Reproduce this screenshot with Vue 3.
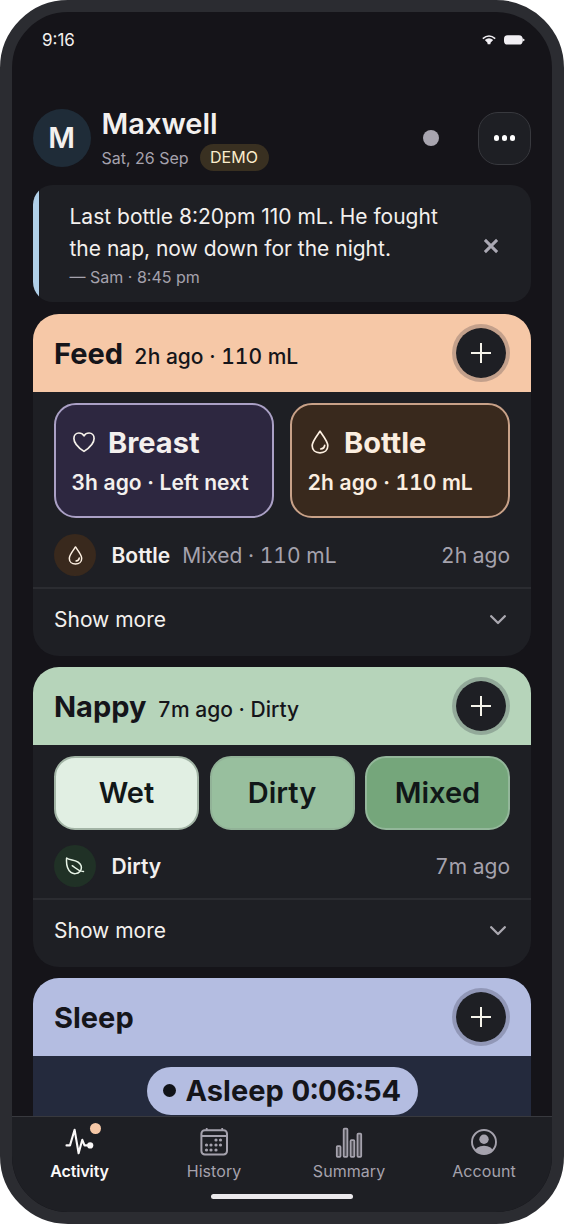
<script setup>
const feedTiles = [
  { name: 'Breast', icon: 'heart', detail: '3h ago · Left next', cls: 'breast' },
  { name: 'Bottle', icon: 'drop', detail: '2h ago · 110 mL', cls: 'bottle' },
]
const nappyTiles = ['Wet', 'Dirty', 'Mixed']
const tabs = ['Activity', 'History', 'Summary', 'Account']
const dots = [
  [17, 13], [21.5, 13],
  [7.5, 18], [12, 18], [17, 18], [21.5, 18],
  [7.5, 23], [12, 23], [17, 23],
]
</script>

<template>
  <div class="phone">
    <div class="status">
      <span class="clock">9:16</span>
      <div class="status-icons">
        <svg width="14" height="10" viewBox="0 0 14 10">
          <path d="M0.8 3.7 Q7 -1.7 13.2 3.7" fill="none" stroke="#f1eff3" stroke-width="1.6" />
          <path d="M2.8 5 Q7 1.3 11.2 5 L8.7 7.5 L8.3 9.3 H5.7 L5.3 7.5 Z" fill="#f1eff3" />
        </svg>
        <svg width="21" height="10" viewBox="0 0 21 10">
          <rect x="0" y="0.3" width="18.6" height="9.2" rx="3.6" fill="#f1eff3" />
          <path d="M18.4 3 L21 4.9 L18.4 6.8 Z" fill="#f1eff3" />
        </svg>
      </div>
    </div>

    <header class="profile">
      <div class="avatar">M</div>
      <div class="who">
        <div class="name">Maxwell</div>
        <div class="date-row"><span class="date">Sat, 26 Sep</span><span class="demo">DEMO</span></div>
      </div>
      <span class="sync"></span>
      <button class="menu"><i></i><i></i><i></i></button>
    </header>

    <main class="content">
      <section class="note">
        <div class="note-body">
          <p>Last bottle 8:20pm 110 mL. He fought</p>
          <p>the nap, now down for the night.</p>
          <small>— Sam · 8:45 pm</small>
        </div>
        <svg class="close" width="16" height="16" viewBox="0 0 16 16"><path d="M1.9 1.9 L14.1 14.1 M14.1 1.9 L1.9 14.1" stroke="#aaa8b3" stroke-width="3" /></svg>
      </section>

      <section class="card">
        <div class="card-head feed">
          <h2>Feed</h2><span class="sub">2h ago · 110 mL</span>
          <button class="add"><svg width="20" height="20" viewBox="0 0 20 20"><path d="M10 0 V20 M0 10 H20" stroke="#f5f3ea" stroke-width="2" /></svg></button>
        </div>
        <div class="feed-tiles">
          <div v-for="t in feedTiles" :key="t.name" class="feed-tile" :class="t.cls">
            <div class="tile-title">
              <svg v-if="t.icon === 'heart'" width="24" height="24" viewBox="0 0 24 24"><path d="M12 21.4 C9.2 19.5 1.9 14.1 1.9 8.4 C1.9 5.2 4.1 3 6.9 3 C9 3 10.9 4.1 12 5.9 C13.1 4.1 15 3 17.1 3 C19.9 3 22.1 5.2 22.1 8.4 C22.1 14.1 14.8 19.5 12 21.4 Z" fill="none" stroke="#f5f1ea" stroke-width="1.7" stroke-linejoin="round" /></svg>
              <svg v-else width="24" height="24" viewBox="0 0 24 24"><path d="M12 1.2 C10 4.4 4.2 11 4.2 15.7 C4.2 20 7.4 22.8 12 22.8 C16.6 22.8 19.8 20 19.8 15.7 C19.8 11 14 4.4 12 1.2 Z M12.7 19 C15 18.8 16.4 17.6 16.7 15.3" fill="none" stroke="#fdf0e2" stroke-width="1.7" stroke-linecap="round" stroke-linejoin="round" /></svg>
              <b>{{ t.name }}</b>
            </div>
            <div class="tile-detail">{{ t.detail }}</div>
          </div>
        </div>
        <div class="entry">
          <span class="badge brown"><svg width="19" height="19" viewBox="0 0 24 24"><path d="M12 1.2 C10 4.4 4.2 11 4.2 15.7 C4.2 20 7.4 22.8 12 22.8 C16.6 22.8 19.8 20 19.8 15.7 C19.8 11 14 4.4 12 1.2 Z M12.7 19 C15 18.8 16.4 17.6 16.7 15.3" fill="none" stroke="#fdf0e2" stroke-width="1.9" stroke-linecap="round" stroke-linejoin="round" /></svg></span>
          <b>Bottle</b><span class="e-note">Mixed · 110 mL</span><time>2h ago</time>
        </div>
        <div class="more"><span>Show more</span><svg width="16" height="10" viewBox="0 0 16 10"><path d="M1.2 1.2 L8 8 L14.8 1.2" fill="none" stroke="#aaa8b0" stroke-width="2.3" stroke-linecap="round" stroke-linejoin="round" /></svg></div>
      </section>

      <section class="card nappy-card">
        <div class="card-head nappy">
          <h2>Nappy</h2><span class="sub">7m ago · Dirty</span>
          <button class="add"><svg width="20" height="20" viewBox="0 0 20 20"><path d="M10 0 V20 M0 10 H20" stroke="#f5f3ea" stroke-width="2" /></svg></button>
        </div>
        <div class="nappy-tiles">
          <div v-for="n in nappyTiles" :key="n" class="nappy-tile" :class="n.toLowerCase()"><span>{{ n }}</span></div>
        </div>
        <div class="entry">
          <span class="badge green"><svg width="20" height="20" viewBox="0 0 20 20"><path d="M1.6 2 C5 5 13.7 2.7 16 9.6 C16.8 12 16.2 14 14.9 15.4 C12.7 18 8.6 18.4 5.9 16.4 C1.8 13.3 1.2 7 1.6 2 Z M7.3 9.7 C10 11 11.7 14.8 18.5 15.5" fill="none" stroke="#e6f3e6" stroke-width="1.5" stroke-linecap="round" stroke-linejoin="round" /></svg></span>
          <b>Dirty</b><time>7m ago</time>
        </div>
        <div class="more"><span>Show more</span><svg width="16" height="10" viewBox="0 0 16 10"><path d="M1.2 1.2 L8 8 L14.8 1.2" fill="none" stroke="#aaa8b0" stroke-width="2.3" stroke-linecap="round" stroke-linejoin="round" /></svg></div>
      </section>

      <section class="card sleep-card">
        <div class="card-head sleep">
          <h2>Sleep</h2>
          <button class="add"><svg width="20" height="20" viewBox="0 0 20 20"><path d="M10 0 V20 M0 10 H20" stroke="#f5f3ea" stroke-width="2" /></svg></button>
        </div>
        <div class="asleep"><div class="pill"><i></i><span>Asleep 0:06:54</span></div></div>
      </section>
    </main>

    <nav class="tabs">
      <div v-for="t in tabs" :key="t" class="tab" :class="t.toLowerCase()">
        <div class="tab-icon">
          <svg v-if="t === 'Activity'" width="30" height="30" viewBox="0 0 30 30"><path d="M1.5 18.4 H5 L9.6 2.8 L13.6 26.2 L17.3 12.8 L19.5 18.4 H25" fill="none" stroke="#fbf9f9" stroke-width="2.1" stroke-linecap="round" stroke-linejoin="round" /><circle cx="25.2" cy="18.4" r="3.1" fill="#fbf9f9" /></svg>
          <svg v-else-if="t === 'History'" width="30" height="30" viewBox="0 0 30 30"><rect x="2.4" y="3.3" width="25.6" height="24.2" rx="3.4" fill="none" stroke="#a5a2ad" stroke-width="2" /><path d="M2.4 9 H28 M7.7 1 V3.5 M23.2 1 V3.5" stroke="#a5a2ad" stroke-width="1.8" /><circle v-for="(d, i) in dots" :key="i" :cx="d[0]" :cy="d[1]" r="1.6" fill="#a5a2ad" /></svg>
          <svg v-else-if="t === 'Summary'" width="30" height="32" viewBox="0 0 30 32"><g fill="#4b4a51" stroke="#a5a2ad" stroke-width="1.8"><rect x="2.8" y="19.2" width="3.7" height="10.6" rx=".8" /><rect x="9.7" y="1.7" width="3.7" height="28.1" rx=".8" /><rect x="16.6" y="13.2" width="3.7" height="16.6" rx=".8" /><rect x="23.5" y="6.6" width="3.7" height="23.2" rx=".8" /></g></svg>
          <svg v-else width="30" height="30" viewBox="0 0 30 30"><clipPath id="face"><circle cx="15" cy="15" r="11.5" /></clipPath><circle cx="15" cy="15" r="12" fill="none" stroke="#a5a2ad" stroke-width="1.9" /><g clip-path="url(#face)" fill="#a5a2ad"><circle cx="15" cy="12.2" r="4.7" /><ellipse cx="15" cy="25" rx="9.2" ry="6.3" /></g></svg>
          <span v-if="t === 'Activity'" class="dot"></span>
        </div>
        <span class="tab-label">{{ t }}</span>
      </div>
      <span class="home"></span>
    </nav>
  </div>
</template>

<style>
html, body { background: #fff; }
</style>
<style scoped>
* { box-sizing: border-box; margin: 0; padding: 0; }
.phone { width: 564px; height: 1224px; border: 12px solid #2b2c31; border-radius: 68px; background: #151419; overflow: hidden; display: flex; flex-direction: column; font-family: Inter, "Liberation Sans", sans-serif; color: #f3f0ee; white-space: nowrap; }
button { border: 0; font: inherit; }
.status { height: 97px; padding: 18px 27px 0 30px; display: flex; justify-content: space-between; align-items: flex-start; flex: none; }
.clock { font-size: 17px; line-height: 20px; }
.status-icons { display: flex; gap: 8.5px; padding-top: 4.5px; }
.status-icons svg { display: block; }
.profile { height: 58px; margin: 0 21px; display: flex; align-items: center; flex: none; }
.avatar { width: 58px; height: 58px; border-radius: 50%; background: #1f2c38; font-size: 29px; font-weight: 600; line-height: 58px; text-align: center; text-indent: -1px; flex: none; }
.who { margin-left: 10.5px; width: 200px; height: 62px; }
.name { font-size: 29px; font-weight: 600; line-height: 33px; }
.date-row { display: flex; align-items: center; height: 27px; margin-top: 4px; }
.date { font-size: 16px; width: 98px; color: #a5a2ad; }
.demo { width: 69px; height: 27px; border-radius: 14px; background: #393021; color: #fbedcc; text-align: center; font-size: 16px; line-height: 27px; }
.sync { margin-left: auto; width: 16px; height: 16px; border-radius: 50%; background: #a8a5af; margin-right: 39px; }
.menu { width: 53px; height: 53px; border: 1px solid #38393e; border-radius: 20px; background: #1e1f24; display: flex; align-items: center; justify-content: center; gap: 3.1px; }
.menu i { width: 5.2px; height: 5.2px; border-radius: 50%; background: #fff; }
.content { flex: 1; min-height: 0; overflow: hidden; padding: 18px 21px 0; display: flex; flex-direction: column; }
.note { height: 117px; flex: none; border-radius: 20px; overflow: hidden; background: linear-gradient(90deg, #b0d0e9 6px, #1e1f24 6px); display: flex; justify-content: space-between; align-items: center; padding: 0 32px 0 36.5px; }
.note-body { align-self: flex-start; padding-top: 16px; }
.note p { font-size: 21px; line-height: 32px; }
.note small { display: block; font-size: 16px; line-height: 24px; color: #a5a2ad; }
.close { margin-top: 4px; }
.card { flex: none; margin-top: 11.5px; height: 342px; background: #1e1f24; border-radius: 26px; overflow: hidden; }
.nappy-card { margin-top: 11px; height: 300px; }
.sleep-card { margin-top: 11px; background: #242a3d; border-radius: 26px 26px 0 0; }
.card-head { height: 78.5px; padding: 0 21px; display: flex; align-items: center; color: #15151a; }
.feed { background: #f6c8a7; }
.nappy { background: #b6d4ba; }
.sleep { background: #b4bde1; }
h2 { font-size: 29px; font-weight: 700; line-height: 36px; padding-top: 2px; }
.sub { font-size: 21px; font-weight: 500; margin-left: 11px; padding-top: 7px; font-variant-numeric: tabular-nums; }
.add { margin-left: auto; width: 58px; height: 58px; border: 4px solid rgba(35, 33, 50, .24); border-radius: 50%; background: #1e1f24; background-clip: padding-box; display: flex; align-items: center; justify-content: center; }
.feed-tiles { display: grid; grid-template-columns: 1fr 1fr; gap: 16px; padding: 11px 21px 0; }
.feed-tile { height: 115px; border: 2px solid; border-radius: 22px; padding: 19px 15.5px; }
.breast { background: #2d2740; border-color: #aaa0c5; }
.bottle { background: #39291d; border-color: #c8a188; color: #fbeee0; }
.tile-title { display: flex; align-items: center; height: 36px; font-size: 29px; gap: 12px; }
.tile-title svg { margin-left: 0.5px; }
.tile-title b { font-weight: 700; }
.tile-detail { font-size: 21px; line-height: 28px; margin-top: 8.5px; font-weight: 600; font-variant-numeric: tabular-nums; }
.entry { height: 70.5px; display: flex; align-items: center; padding: 6px 21px 0; font-size: 21px; border-bottom: 2px solid #2b2c31; font-variant-numeric: tabular-nums; }
.nappy-card .entry { height: 69.5px; padding-top: 5px; }
.entry b { font-weight: 600; }
.badge { width: 42px; height: 42px; border-radius: 50%; margin-right: 15.5px; display: flex; align-items: center; justify-content: center; }
.brown { background: #39291d; }
.green { background: #203126; }
.e-note { color: #a5a2ad; margin-left: 12px; }
time { color: #a5a2ad; margin-left: auto; }
.more { height: 62px; padding: 0 25px 0 21px; display: flex; align-items: center; justify-content: space-between; font-size: 21px; }
.nappy-tiles { display: grid; grid-template-columns: repeat(3, 1fr); gap: 10.5px; padding: 11px 21px 0; }
.nappy-tile { height: 74px; border: 2px solid; border-radius: 21px; padding-bottom: 1px; color: #111718; font-size: 29px; font-weight: 600; display: flex; align-items: center; justify-content: center; }
.wet { background: #e1efe3; border-color: #a2b4a5; }
.dirty { background: #98bf9e; border-color: #91b297; }
.mixed { background: #75a67b; border-color: #93b79a; }
.asleep { padding-top: 11px; display: flex; justify-content: center; }
.pill { width: 271px; height: 47.5px; border-radius: 24px; background: #b4bde1; color: #15151a; display: flex; align-items: center; padding-left: 16px; gap: 10px; font-size: 29px; font-weight: 700; font-variant-numeric: tabular-nums; }
.pill i { width: 13px; height: 13px; border-radius: 50%; background: #111318; }
.tabs { height: 96px; flex: none; background: #1e1f24; border-top: 1.5px solid #38393e; display: grid; grid-template-columns: repeat(4, 1fr); position: relative; }
.tab { display: flex; flex-direction: column; align-items: center; padding: 10px 1px 0 0; color: #a5a2ad; }
.tab-icon { width: 30px; height: 32px; position: relative; }
.tab-icon svg { display: block; }
.dot { position: absolute; left: 25.5px; top: -4px; width: 11px; height: 11px; border-radius: 50%; background: #f6c8a7; }
.tab-label { font-size: 16px; line-height: 22px; margin-top: 1px; letter-spacing: .05px; }
.activity { padding-right: 0; }
.activity .tab-label { color: #fbf9f9; font-weight: 600; letter-spacing: -.1px; }
.home { position: absolute; left: 199px; top: 77px; width: 142px; height: 5px; border-radius: 3px; background: #ebe9ec; }
</style>
